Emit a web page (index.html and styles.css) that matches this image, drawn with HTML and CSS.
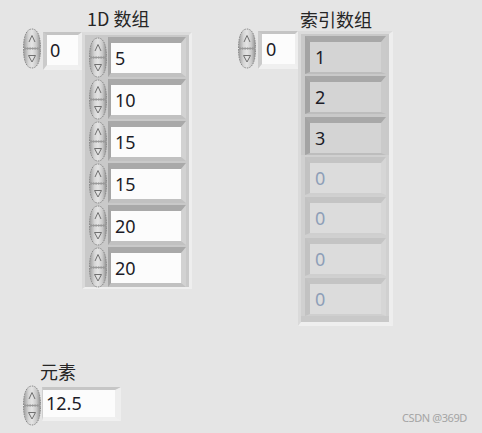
FILE: index.html
```html
<!DOCTYPE html>
<html>
<head>
<meta charset="utf-8">
<link rel="stylesheet" href="styles.css">
</head>
<body>
<svg class="defs" aria-hidden="true">
  <defs>
    <linearGradient id="sg" x1="0" y1="0" x2="1" y2="0">
      <stop offset="0" stop-color="#9c9c9c"/>
      <stop offset="0.3" stop-color="#d6d6d6"/>
      <stop offset="0.5" stop-color="#e4e4e4"/>
      <stop offset="0.75" stop-color="#cbcbcb"/>
      <stop offset="1" stop-color="#909090"/>
    </linearGradient>
    <symbol id="spin" viewBox="0 0 20 41">
      <path d="M1.5,20 C1.5,8 4.5,1 10,1 C15.5,1 18.5,8 18.5,20 Z" fill="url(#sg)" stroke="#8c8c8c" stroke-width="1" stroke-dasharray="1.5 1"/>
      <path d="M1.5,21 C1.5,33 4.5,40 10,40 C15.5,40 18.5,33 18.5,21 Z" fill="url(#sg)" stroke="#8c8c8c" stroke-width="1" stroke-dasharray="1.5 1"/>
      <line x1="2" y1="20.5" x2="18" y2="20.5" stroke="#9a9a9a" stroke-width="1"/>
      <polyline points="7,14 10,7.5 13,14" fill="none" stroke="#707070" stroke-width="1"/>
      <path d="M6.5,27.5 H13.5 L10,34 Z" fill="none" stroke="#707070" stroke-width="1"/>
    </symbol>
  </defs>
</svg>

<div class="ctl arr-a">
  <div class="lbl">1D 数组</div>
  <div class="body">
    <svg class="spin"><use href="#spin"/></svg>
    <div class="ibox">0</div>
    <div class="frame frame-a">
      <div class="cell"><svg class="spin"><use href="#spin"/></svg><div class="well">5</div></div>
      <div class="cell"><svg class="spin"><use href="#spin"/></svg><div class="well">10</div></div>
      <div class="cell"><svg class="spin"><use href="#spin"/></svg><div class="well">15</div></div>
      <div class="cell"><svg class="spin"><use href="#spin"/></svg><div class="well">15</div></div>
      <div class="cell"><svg class="spin"><use href="#spin"/></svg><div class="well">20</div></div>
      <div class="cell"><svg class="spin"><use href="#spin"/></svg><div class="well">20</div></div>
    </div>
  </div>
</div>

<div class="ctl arr-b">
  <div class="lbl">索引数组</div>
  <div class="body">
    <svg class="spin"><use href="#spin"/></svg>
    <div class="ibox ibox-b">0</div>
    <div class="frame frame-b">
      <div class="icell"><div class="iwell">1</div></div>
      <div class="icell"><div class="iwell">2</div></div>
      <div class="icell"><div class="iwell">3</div></div>
      <div class="icell off"><div class="iwell">0</div></div>
      <div class="icell off"><div class="iwell">0</div></div>
      <div class="icell off"><div class="iwell">0</div></div>
      <div class="icell off"><div class="iwell">0</div></div>
    </div>
  </div>
</div>

<div class="ctl el">
  <div class="lbl lbl-el">元素</div>
  <div class="body">
    <svg class="spin"><use href="#spin"/></svg>
    <div class="ebox">12.5</div>
  </div>
</div>

<div class="mark">CSDN @369D</div>
</body>
</html>
```

FILE: styles.css
```css
body {
  margin: 0;
  width: 482px;
  height: 433px;
  position: relative;
  overflow: hidden;
  background: #e5e5e5;
  font-family: "Noto Sans", "Noto Sans CJK SC", sans-serif;
  color: #1c1c28;
}

.defs {
  position: absolute;
  width: 0;
  height: 0;
}

.ctl {
  position: absolute;
}

.arr-a { left: 22px; top: 8px; }
.arr-b { left: 237px; top: 9px; }
.el { left: 22px; top: 361px; }

.lbl {
  font-family: "Noto Sans CJK SC", sans-serif;
  font-size: 18px;
  line-height: 20px;
  height: 20px;
  color: #262626;
  white-space: nowrap;
}

.arr-a .lbl { margin-left: 65px; }
.arr-b .lbl { margin-left: 63px; height: 19px; }
.lbl-el { margin-left: 18px; height: 24px; }

.body {
  display: flex;
  align-items: flex-start;
}

.spin {
  display: block;
  flex: none;
  width: 20px;
  height: 41px;
}

.ibox {
  margin-top: 4px;
  margin-left: 1px;
  width: 28px;
  height: 30px;
  padding-left: 3px;
  border-style: solid;
  border-width: 3px 4px 5px 4px;
  border-color: #c4c4c4 #eeeeee #f0f0f0 #cbcbcb;
  background: #fcfcfc;
  font-size: 18px;
  line-height: 30px;
}

.ibox-b {
  width: 29px;
  padding-left: 4px;
  border-right-width: 3px;
}

.arr-b .ibox { margin-top: 3px; }

.frame {
  margin-top: 4px;
  display: flex;
  flex-direction: column;
  border-style: solid;
  border-width: 3px;
  border-color: #dcdcdc #eeeeee #efefef #dadada;
  background: #c9c9c9;
}

.arr-b .frame { margin-top: 3px; }

.frame-a { border-bottom-width: 2px; }

.frame-b {
  border-right-width: 4px;
  border-bottom-width: 4px;
  padding-bottom: 6px;
}

.cell {
  display: flex;
  align-items: flex-start;
  box-sizing: border-box;
  height: 42px;
  padding: 2px 3px 0 3px;
}

.well {
  width: 66px;
  height: 30px;
  padding-left: 4px;
  border-style: solid;
  border-width: 6px 5px 4px 3px;
  border-color: #a9a9a9 #d2d2d2 #c1c1c1 #a5a5a5;
  background: #fcfcfc;
  font-size: 18px;
  line-height: 30px;
}

.icell {
  box-sizing: border-box;
  height: 40.33px;
  padding: 2px 3px 0 4px;
}

.iwell {
  width: 66px;
  height: 30px;
  padding-left: 5px;
  border-style: solid;
  border-width: 6px 5px 2px 5px;
  border-color: #a8a8a8 #cacaca #bdbdbd #a4a4a4;
  background: #d4d4d4;
  font-size: 18px;
  line-height: 30px;
}

.icell.off {
  background: #d0d0d0;
}

.icell.off .iwell {
  border-color: #c4c4c4 #d6d6d6 #cfcfcf #c2c2c2;
  background: #dcdcdc;
  color: #8e9fb8;
}

.ebox {
  margin-top: 2px;
  width: 69px;
  height: 27px;
  padding-left: 3px;
  border-style: solid;
  border-width: 3px 6px 4px 1px;
  border-color: #c6c6c6 #eeeeee #f0f0f0 #cfcfcf;
  background: #fcfcfc;
  font-size: 18px;
  line-height: 27px;
}

.mark {
  position: absolute;
  right: 15px;
  top: 410px;
  font-size: 11px;
  letter-spacing: -0.4px;
  color: #a4a4a4;
  white-space: nowrap;
}
```
